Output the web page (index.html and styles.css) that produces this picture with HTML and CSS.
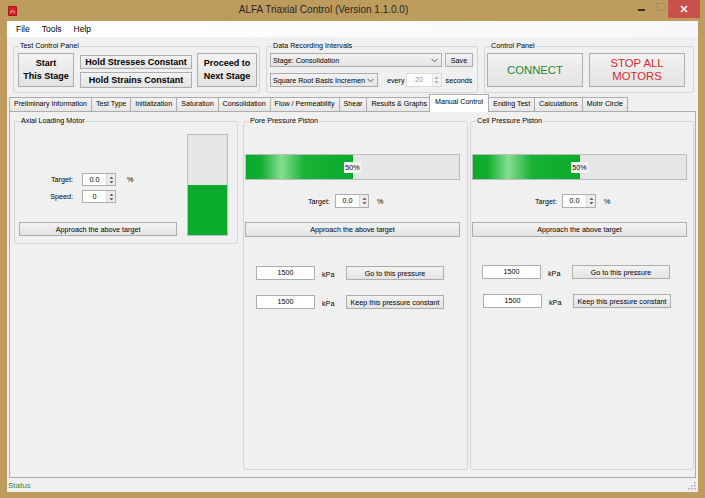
FILE: index.html
```html
<!DOCTYPE html>
<html>
<head>
<meta charset="utf-8">
<title>ALFA Triaxial Control</title>
<link rel="stylesheet" href="styles.css">
</head>
<body>
<div class="window">
  <div class="titlebar">
    <svg class="app-icon" viewBox="0 0 9 10"><rect width="9" height="10" rx="1.2" fill="#A8141A"/><rect x="1" y="1" width="7" height="8" rx="0.8" fill="#D6262B"/><path d="M2.3 7 Q4.5 1.8 6.7 7" stroke="#F5C4C4" stroke-width="1" fill="none"/></svg>
    <div class="title">ALFA Triaxial Control (Version 1.1.0.0)</div>
    <div class="caption">
      <span class="cap-min"></span>
      <span class="cap-max"></span>
      <span class="cap-close"><svg width="8" height="8" viewBox="0 0 8 8"><path d="M1 1 L7 7 M7 1 L1 7" stroke="#fff" stroke-width="1.6"/></svg></span>
    </div>
  </div>

  <div class="client">
    <div class="menubar"><span>File</span><span>Tools</span><span>Help</span></div>

    <div class="toprow">
      <fieldset class="group g-tcp">
        <legend>Test Control Panel</legend>
        <div class="tcp-body">
          <button class="btn bold w-start">Start<br>This Stage</button>
          <div class="hold-col">
            <button class="btn bold hold">Hold Stresses Constant</button>
            <button class="btn bold hold">Hold Strains Constant</button>
          </div>
          <button class="btn bold w-proceed">Proceed to<br>Next Stage</button>
        </div>
      </fieldset>

      <fieldset class="group g-dri">
        <legend>Data Recording Intervals</legend>
        <div class="dri-body">
          <div class="dri-row">
            <div class="combo c-stage"><span class="combo-text">Stage: Consolidation</span><svg class="chev" viewBox="0 0 7 5"><path d="M0.5 0.8 L3.5 3.8 L6.5 0.8" fill="none" stroke="#555" stroke-width="1"/></svg></div>
            <button class="btn save">Save</button>
          </div>
          <div class="dri-row row2">
            <div class="combo c-basis"><span class="combo-text">Square Root Basis Incremen</span><svg class="chev" viewBox="0 0 7 5"><path d="M0.5 0.8 L3.5 3.8 L6.5 0.8" fill="none" stroke="#555" stroke-width="1"/></svg></div>
            <span class="every">every</span>
            <div class="numeric n-interval disabled"><span class="num-val">20</span><span class="spin"><svg viewBox="0 0 7 12"><path d="M1.5 4.8 L3.5 2.8 L5.5 4.8Z M1.5 7.2 L3.5 9.2 L5.5 7.2Z" fill="#9a9a9a"/></svg></span></div>
            <span class="seconds">seconds</span>
          </div>
        </div>
      </fieldset>

      <fieldset class="group g-cp">
        <legend>Control Panel</legend>
        <div class="cp-body">
          <button class="btn cp-btn connect">CONNECT</button>
          <button class="btn cp-btn stop">STOP ALL<br>MOTORS</button>
        </div>
      </fieldset>
    </div>

    <div class="tabs">
      <div class="tab">Preliminary Information</div>
      <div class="tab">Test Type</div>
      <div class="tab">Initialization</div>
      <div class="tab">Saturation</div>
      <div class="tab">Consolidation</div>
      <div class="tab">Flow / Permeability</div>
      <div class="tab">Shear</div>
      <div class="tab">Results &amp; Graphs</div>
      <div class="tab active">Manual Control</div>
      <div class="tab">Ending Test</div>
      <div class="tab">Calculations</div>
      <div class="tab">Mohr Circle</div>
    </div>

    <div class="tabpage">
      <fieldset class="group g-axial">
        <legend>Axial Loading Motor</legend>
        <div class="axial-body">
          <div class="axial-left">
            <div class="arow">
              <span class="alabel">Target:</span>
              <div class="numeric n-axial"><span class="num-val">0.0</span><span class="spin"><svg viewBox="0 0 7 12"><path d="M1.5 4.8 L3.5 2.8 L5.5 4.8Z M1.5 7.2 L3.5 9.2 L5.5 7.2Z" fill="#444"/></svg></span></div>
              <span class="pct">%</span>
            </div>
            <div class="arow">
              <span class="alabel">Speed:</span>
              <div class="numeric n-axial"><span class="num-val">0</span><span class="spin"><svg viewBox="0 0 7 12"><path d="M1.5 4.8 L3.5 2.8 L5.5 4.8Z M1.5 7.2 L3.5 9.2 L5.5 7.2Z" fill="#444"/></svg></span></div>
            </div>
            <button class="btn approach-axial">Approach the above target</button>
          </div>
          <div class="vbar"><div class="vbar-fill" style="height:50%"></div></div>
        </div>
      </fieldset>

      <fieldset class="group g-piston g-pore">
        <legend>Pore Pressure Piston</legend>
        <div class="piston-body">
          <div class="progress"><div class="pfill" style="width:50%"></div><span class="plabel">50%</span></div>
          <div class="trow">
            <span class="tlabel">Target:</span>
            <div class="numeric n-target"><span class="num-val">0.0</span><span class="spin"><svg viewBox="0 0 7 12"><path d="M1.5 4.8 L3.5 2.8 L5.5 4.8Z M1.5 7.2 L3.5 9.2 L5.5 7.2Z" fill="#444"/></svg></span></div>
            <span class="tpct">%</span>
          </div>
          <button class="btn approach">Approach the above target</button>
          <div class="prow">
            <div class="textbox">1500</div><span class="kpa">kPa</span>
            <button class="btn pbtn">Go to this pressure</button>
          </div>
          <div class="prow">
            <div class="textbox">1500</div><span class="kpa">kPa</span>
            <button class="btn pbtn">Keep this pressure constant</button>
          </div>
        </div>
      </fieldset>

      <fieldset class="group g-piston g-cell">
        <legend>Cell Pressure Piston</legend>
        <div class="piston-body">
          <div class="progress"><div class="pfill" style="width:50%"></div><span class="plabel">50%</span></div>
          <div class="trow">
            <span class="tlabel">Target:</span>
            <div class="numeric n-target"><span class="num-val">0.0</span><span class="spin"><svg viewBox="0 0 7 12"><path d="M1.5 4.8 L3.5 2.8 L5.5 4.8Z M1.5 7.2 L3.5 9.2 L5.5 7.2Z" fill="#444"/></svg></span></div>
            <span class="tpct">%</span>
          </div>
          <button class="btn approach">Approach the above target</button>
          <div class="prow cell-first">
            <div class="textbox">1500</div><span class="kpa">kPa</span>
            <button class="btn pbtn">Go to this pressure</button>
          </div>
          <div class="prow">
            <div class="textbox">1500</div><span class="kpa">kPa</span>
            <button class="btn pbtn">Keep this pressure constant</button>
          </div>
        </div>
      </fieldset>
    </div>

    <div class="statusbar">
      <span class="status">Status</span>
      <svg class="grip" viewBox="0 0 8 8"><g fill="#A5A5A5"><rect x="6" y="0" width="1.5" height="1.5"/><rect x="3" y="3" width="1.5" height="1.5"/><rect x="6" y="3" width="1.5" height="1.5"/><rect x="0" y="6" width="1.5" height="1.5"/><rect x="3" y="6" width="1.5" height="1.5"/><rect x="6" y="6" width="1.5" height="1.5"/></g></svg>
    </div>
  </div>
</div>
</body>
</html>
```
FILE: styles.css
```css
* { box-sizing: border-box; }
html, body { margin: 0; padding: 0; }
body {
  width: 705px; height: 498px; overflow: hidden;
  background: #BD9C5E;
  font-family: "Liberation Sans", Arial, sans-serif;
  font-size: 7.2px; color: #000;
}
.window { width: 705px; height: 498px; display: flex; flex-direction: column; background: #BD9C5E; }

/* title bar */
.titlebar { flex: none; height: 21px; display: flex; align-items: flex-start; }
.app-icon { flex: none; width: 9px; height: 10px; margin: 6px 0 0 8px; }
.title { flex: 1; text-align: center; font-size: 10px; line-height: 20px; color: #262626; }
.caption { flex: none; display: flex; margin-right: 5px; }
.cap-min { width: 22px; height: 18px; display: flex; align-items: center; justify-content: center; }
.cap-min::before { content: ""; width: 7px; height: 2px; background: #3A3021; margin-top: 2px; }
.cap-max { width: 16px; height: 18px; display: flex; align-items: center; justify-content: center; }
.cap-max::before { content: ""; width: 7px; height: 6px; border: 1px solid #A88E5A; margin-top: -5px; }
.cap-close { width: 32px; height: 18px; background: #C9514B; display: flex; align-items: center; justify-content: center; }

/* client */
.client { flex: 1; min-height: 0; margin: 0 7px 6px; background: #F0F0F0; display: flex; flex-direction: column; }
.menubar {
  flex: none; height: 16px; display: flex; align-items: center; gap: 12px;
  padding-left: 9px; font-size: 8.5px;
  background: linear-gradient(to right, #FFFFFF, #F6F7F8);
}

/* group boxes */
.group { margin: 0; padding: 0; border: 1px solid #D5D5D5; border-radius: 3px; min-width: 0; }
.group > legend { padding: 0 1px; margin-left: 5px; font-size: 7.2px; line-height: 10px; }

.toprow { flex: none; height: 56px; display: flex; padding: 4px 0 0 6px; }
.g-tcp { width: 247px; height: 52px; }
.g-dri { width: 212px; height: 52px; margin-left: 6px; }
.g-cp { width: 210px; height: 52px; margin-left: 6px; }

/* buttons */
.btn {
  margin: 0; padding: 0; font: inherit; color: #000;
  border: 1px solid #ADADAD; border-radius: 0;
  background: linear-gradient(#F3F3F3, #E3E3E3);
  display: flex; align-items: center; justify-content: center; text-align: center;
}
.bold { font-weight: bold; font-size: 9px; line-height: 13px; }

.tcp-body { display: flex; padding: 2px 0 0 4px; }
.w-start { width: 56px; height: 34px; }
.hold-col { width: 112px; margin-left: 6px; display: flex; flex-direction: column; gap: 3px; padding-top: 2px; }
.hold { height: 14px; }
.hold + .hold { height: 16px; }
.w-proceed { width: 60px; height: 34px; margin-left: 5px; }

.dri-body { padding: 2px 0 0 3px; }
.dri-row { display: flex; align-items: center; }
.dri-row.row2 { margin-top: 6px; }
.combo {
  height: 14px; border: 1px solid #ACACAC;
  background: linear-gradient(#F2F2F2, #E5E5E5);
  display: flex; align-items: center; padding: 0 3px 0 2px;
}
.combo-text { flex: 1; white-space: nowrap; }
.c-stage { width: 172px; }
.c-basis { width: 108px; }
.chev { flex: none; width: 7px; height: 5px; margin-left: 2px; }
.save { width: 28px; height: 14px; margin-left: 3px; }
.every { margin-left: 9px; }
.seconds { margin-left: 4px; }

.numeric { height: 14px; border: 1px solid #ABADB3; background: #FFF; display: flex; }
.num-val { flex: 1; text-align: center; line-height: 12px; }
.spin { width: 9px; background: #ECECEC; border-left: 1px solid #DADADA; display: flex; align-items: center; justify-content: center; }
.spin svg { width: 7px; height: 12px; }
.n-interval { width: 36px; margin-left: 1px; }
.numeric.disabled { border-color: #D9D9D9; color: #8D8D8D; }
.numeric.disabled .spin { background: #F4F4F4; border-left-color: #E6E6E6; }

.cp-body { display: flex; gap: 6px; padding: 2px 0 0 2px; }
.cp-btn { width: 96px; height: 34px; font-size: 11.3px; line-height: 13px; }
.connect { color: #22892C; }
.stop { color: #D92B2B; }

/* tabs */
.tabs { flex: none; height: 18px; display: flex; align-items: flex-end; padding-left: 2px; position: relative; z-index: 1; }
.tab {
  height: 14px; padding: 0 4px; border: 1px solid #ACACAC; border-bottom: 0;
  background: linear-gradient(#F3F3F3, #E6E6E6); line-height: 13px; white-space: nowrap; margin-right: -1px;
  font-size: 7.1px;
}
.tab.active { height: 18px; margin: 0 -1px -1px -2px; padding: 0 5px; background: #FFF; line-height: 15px; position: relative; z-index: 2; }

.tabpage {
  flex: 1; min-height: 0; margin: 0 2px; border: 1px solid #ACACAC; background: #F0F0F0;
  display: flex; align-items: stretch; padding: 4px 0 7px 4px;
}
.g-axial { width: 224px; height: 128px; align-self: flex-start; margin-right: 5px; }
.g-piston { width: 225px; }
.g-pore { margin-right: 2px; }
.g-cell { width: 224px; }

.axial-body { display: flex; padding: 8px 9px 0 4px; }
.axial-left { width: 159px; margin-right: 10px; display: flex; flex-direction: column; justify-content: flex-end; }
.vbar { width: 41px; height: 102px; border: 1px solid #BCBCBC; background: #E6E6E6; display: flex; flex-direction: column; justify-content: flex-end; }
.vbar-fill { background: #0AAB2B; }
.arow { display: flex; align-items: center; height: 13px; }
.arow + .arow { margin-top: 4px; }
.alabel { width: 54px; text-align: right; }
.n-axial { width: 34px; height: 13px; margin-left: 9px; }
.n-axial .num-val { line-height: 11px; }
.pct { margin-left: 11px; }
.approach-axial { height: 14px; margin-top: 19px; }

.piston-body { padding: 28px 0 0 1px; }
.progress { width: 215px; height: 26px; border: 1px solid #BCBCBC; background: #E6E6E6; display: grid; }
.progress > * { grid-area: 1 / 1; }
.pfill {
  justify-self: start; height: 100%;
  background: linear-gradient(to right, #0AAB2B 0%, #10AE30 14%, #86DE90 33%, #17B236 55%, #0AAB2B 100%);
}
.plabel { justify-self: center; align-self: center; background: #F3F5F3; padding: 0 1px; line-height: 11px; }
.trow { display: flex; align-items: center; height: 14px; margin-top: 14px; padding-left: 63px; }
.tlabel { width: 21px; }
.n-target { width: 34px; margin-left: 6px; }
.tpct { margin-left: 8px; }
.approach { width: 215px; height: 15px; margin-top: 14px; }
.prow { display: flex; align-items: center; height: 14px; margin-top: 29px; padding-left: 11px; }
.prow + .prow { margin-top: 15px; }
.prow.cell-first { margin-top: 28px; padding-left: 10px; }
.textbox { width: 59px; height: 14px; border: 1px solid #ABADB3; background: #FFF; text-align: center; line-height: 12px; }
.kpa { width: 31px; padding: 3px 0 0 7px; }
.pbtn { width: 98px; height: 14px; }

/* status bar */
.statusbar { flex: none; height: 14px; display: flex; align-items: center; justify-content: space-between; padding: 0 2px 0 1px; }
.status { font-size: 8px; color: #2F8A3A; }
.grip { width: 8px; height: 8px; align-self: flex-end; margin-bottom: 2px; }
```
